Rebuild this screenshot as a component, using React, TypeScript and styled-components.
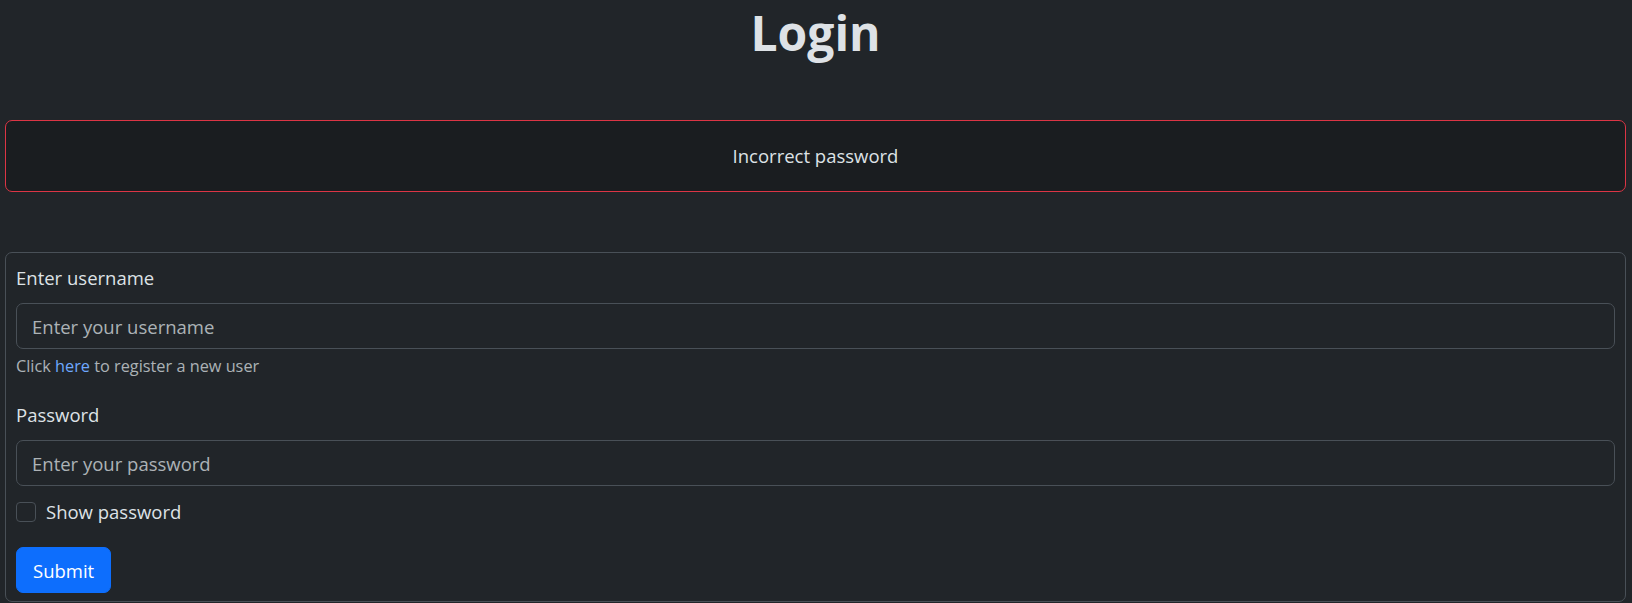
import React from "react";
import styled, { createGlobalStyle } from "styled-components";

const Global = createGlobalStyle`
  html, body {
    margin: 0;
    padding: 0;
    background: #212529;
  }
  body {
    font-family: "Open Sans", Lato, sans-serif;
    color: #dee2e6;
  }
  * { box-sizing: border-box; }
`;

const Page = styled.div`
  padding: 0 6px 0 5px;
  display: flex;
  flex-direction: column;
`;

const Title = styled.h1`
  margin: 0 0 55px;
  text-align: center;
  font-size: 48px;
  line-height: 65px;
  font-weight: 700;
  color: #dee2e6;
`;

const Alert = styled.div`
  height: 72px;
  display: flex;
  align-items: center;
  justify-content: center;
  background: #1a1d20;
  border: 1px solid #dc3545;
  border-radius: 7px;
  font-size: 18.5px;
  line-height: 28px;
  color: #dee2e6;
  margin-bottom: 60px;
`;

const Card = styled.form`
  border: 1px solid #495057;
  border-radius: 7px;
  padding: 11px 10px 8px;
  display: flex;
  flex-direction: column;
  align-items: stretch;
`;

const Label = styled.label<{ $gapTop?: number }>`
  display: block;
  font-size: 18.5px;
  line-height: 28px;
  color: #dee2e6;
  margin-top: ${(p) => p.$gapTop ?? 0}px;
  margin-bottom: 11px;
`;

const TextInput = styled.input`
  display: block;
  width: 100%;
  height: 46px;
  padding: 0 15px;
  background: #212529;
  border: 1px solid #495057;
  border-radius: 7px;
  color: #dee2e6;
  font-family: inherit;
  font-size: 18.5px;
  outline: none;
  &::placeholder {
    color: rgba(222, 226, 230, 0.75);
  }
`;

const HelpText = styled.div`
  margin-top: 5px;
  font-size: 16.3px;
  line-height: 24px;
  color: rgba(222, 226, 230, 0.75);
`;

const Link = styled.a`
  color: #6ea8fe;
  text-decoration: none;
`;

const CheckRow = styled.label`
  display: flex;
  align-items: center;
  gap: 10px;
  margin-top: 12px;
  font-size: 18.5px;
  line-height: 28px;
  color: #dee2e6;
`;

const CheckBox = styled.input`
  appearance: none;
  margin: 0;
  width: 20px;
  height: 20px;
  border: 1px solid #495057;
  border-radius: 4px;
  background: #212529;
`;

const SubmitButton = styled.button`
  align-self: flex-start;
  margin-top: 21px;
  height: 46px;
  padding: 0 16px;
  background: #0d6efd;
  border: 1px solid #0d6efd;
  border-radius: 7px;
  color: #fff;
  font-family: inherit;
  font-size: 18.5px;
`;

export default function App() {
  return (
    <>
      <Global />
      <Page>
        <Title>Login</Title>
        <Alert>Incorrect password</Alert>
        <Card onSubmit={(e) => e.preventDefault()}>
          <Label htmlFor="username">Enter username</Label>
          <TextInput id="username" type="text" placeholder="Enter your username" />
          <HelpText>
            Click <Link href="#">here</Link> to register a new user
          </HelpText>
          <Label htmlFor="password" $gapTop={23}>Password</Label>
          <TextInput id="password" type="password" placeholder="Enter your password" />
          <CheckRow>
            <CheckBox type="checkbox" />
            Show password
          </CheckRow>
          <SubmitButton type="submit">Submit</SubmitButton>
        </Card>
      </Page>
    </>
  );
}
